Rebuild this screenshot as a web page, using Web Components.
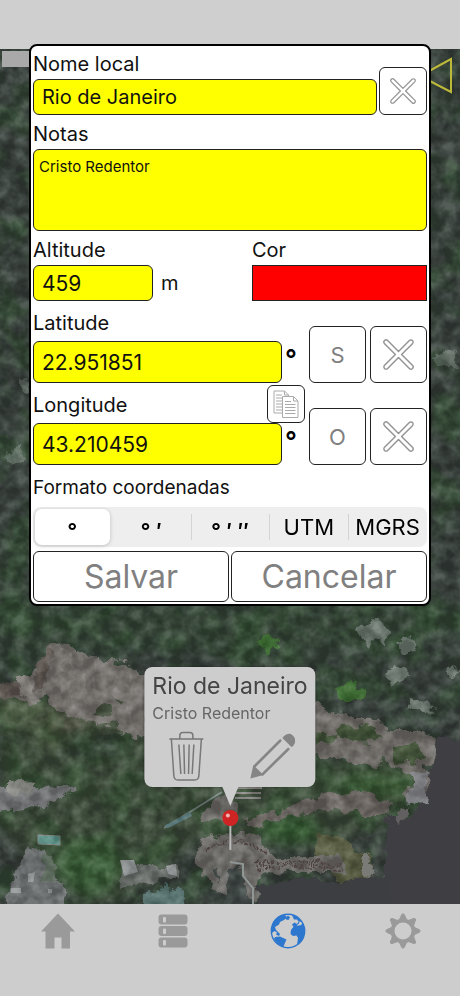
<!DOCTYPE html>
<html lang="pt">
<head>
<meta charset="utf-8">
<meta name="viewport" content="width=device-width, initial-scale=1">
<title>Mapa</title>
<style>
    body {
        margin: 0;
        font-family: Inter, "Liberation Sans", sans-serif;
        color: #111;
        background: #cdcdcd;
    }
</style>
</head>
<body>
<map-app></map-app>

<script>
const ICONS = {
    cross: `<svg viewBox="0 0 32 32" fill="#fff" stroke="#949494" stroke-width="1.5" stroke-linejoin="round">
        <path d="M4.8 1.6 L16 12.8 L27.2 1.6 A2.2 2.2 0 0 1 30.4 4.8 L19.2 16 L30.4 27.2 A2.2 2.2 0 0 1 27.2 30.4 L16 19.2 L4.8 30.4 A2.2 2.2 0 0 1 1.6 27.2 L12.8 16 L1.6 4.8 A2.2 2.2 0 0 1 4.8 1.6 Z"/></svg>`,
    copy: `<svg viewBox="0 0 26 28" fill="#fff" stroke="#aaa" stroke-width="1">
        <path d="M1 1 H11.5 L15.5 5 V23 H1 Z M11.5 1 V5 H15.5"/>
        <path d="M3 5 H9 M3 8 H9 M3 11 H9 M3 14 H9 M3 17 H9 M3 20 H9"/>
        <path d="M9.5 6.5 H20.5 L25 11 V27.5 H9.5 Z M20.5 6.5 V11 H25"/>
        <path d="M12 11.5 H18 M12 14.5 H22.5 M12 17.5 H22.5 M12 20.5 H22.5 M12 23.5 H22.5"/></svg>`,
    trash: `<svg viewBox="0 0 36 50" fill="none" stroke="#777" stroke-width="1.5" stroke-linejoin="round">
        <path d="M1 8 H35 M11.5 8 V4.5 Q11.5 1.5 14.5 1.5 H21.5 Q24.5 1.5 24.5 4.5 V8"/>
        <path d="M3 8 L5.5 45 Q6 49 9.5 49 H26.5 Q30 49 30.5 45 L33 8"/>
        <path d="M10.5 13.5 L12.5 43 M15.5 13.5 L16.2 43 M20.8 13.5 L20.2 43 M25.5 13.5 L23.8 43"/></svg>`,
    pencil: `<svg viewBox="0 0 46 46" fill="#858585">
        <path d="M33 5 Q37 0 41.5 1 Q47 4.5 45.5 10 Q44.5 13 42 14 Z"/>
        <path d="M1 45.5 L4 32 L14 42 Z"/>
        <path d="M5.5 33 L31 7.5 M13 41.5 L39 16" fill="none" stroke="#858585" stroke-width="2.5" stroke-linecap="round"/></svg>`,
    home: `<svg viewBox="0 0 36 36" fill="#9a9a9a">
        <path d="M18 0.5 L35 18.5 H30 V35.5 H21.5 V24.5 H14.5 V35.5 H5.5 V18.5 H1 Z"/></svg>`,
    list: `<svg viewBox="0 0 36 36" fill="#9a9a9a">
        <rect x="3.5" y="1.5" width="29" height="10" rx="3"/><rect x="3.5" y="13" width="29" height="10" rx="3"/>
        <rect x="3.5" y="24.5" width="29" height="10" rx="3"/>
        <g fill="#cdcdcd"><rect x="8" y="4" width="3" height="5.5" rx="1"/><rect x="8" y="15.5" width="3" height="5.5" rx="1"/>
        <rect x="8" y="27" width="3" height="5.5" rx="1"/></g></svg>`,
    globe: `<svg viewBox="0 0 36 36" fill="#2e77cf">
        <circle cx="18" cy="18" r="16.7" fill="#cdcdcd" stroke="#2e77cf" stroke-width="1.4"/>
        <path d="M15 1.5 Q7 2 3 9 Q0 16 2 20 L4.5 18 L7 19.5 L6 21.5 L9 23 L10 21 L6 17 L5 14 L9 11.5 L10 9 L14 7 L16.5 4.5 Z"/>
        <path d="M5 24 L10 23.5 L16.5 26.5 L14.5 31 L13.5 34 Q7 31.5 4 26 Z"/>
        <path d="M15 5 L18 2.5 L20 4.5 L18.5 7 L16 6.5 Z"/>
        <path d="M22 2 Q30 5 31.5 9 L28.5 8.5 L27 11 L24.5 9.5 L22 11.5 L23.5 14 L21 17 L20.5 21 L23 23 L26.5 22.5 L28 25 L27 32 Q33 28 34.5 21 Q35.5 14 32.5 9.5 L30 14.5 L26.5 12.5 L29.5 10 L27 6.5 L24 6.5 Z"/>
        <path d="M25 13 L32 12 L34 16 L30 22 L23 21 L22 16 Z"/></svg>`,
    gear: `<svg viewBox="-18 -18 36 36" fill="#9a9a9a" stroke="#9a9a9a">
        <circle r="10.5" fill="none" stroke-width="4"/>
        ${[0, 45, 90, 135, 180, 225, 270, 315].map((a) => `<path transform="rotate(${a})" stroke-width="1" stroke-linejoin="round" d="M-3.5 -11.5 L-1.2 -16.5 Q0 -18 1.2 -16.5 L3.5 -11.5 Z"/>`).join('')}</svg>`
};

/* Icon picked by name; the size comes from the host */
class AppIcon extends HTMLElement {
    connectedCallback() {
        this.attachShadow({ mode: 'open' });
        this.shadowRoot.innerHTML = `
        <style>
            :host { display: block; }
            svg { display: block; width: 100%; height: 100%; }
        </style>
        ${ICONS[this.getAttribute('name')] || ''}
        `;
    }
}

/* Bordered push button */
class BoxButton extends HTMLElement {
    connectedCallback() {
        this.attachShadow({ mode: 'open' });
        this.shadowRoot.innerHTML = `
        <style>
            :host { display: block; font-size: 22px; }
            button {
                display: flex;
                align-items: center;
                justify-content: center;
                box-sizing: border-box;
                width: 100%;
                height: 100%;
                padding: 0;
                border: 1px solid #222;
                border-radius: 6px;
                background: #fff;
                color: #808080;
                font: inherit;
                cursor: pointer;
            }
        </style>
        <button type="button"><slot></slot></button>
        `;
        if (this.hasAttribute('label')) {
            this.shadowRoot.querySelector('button').setAttribute('aria-label', this.getAttribute('label'));
        }
    }
}

/* Label above a text field; "tools" sits beside the label, "unit" beside the field */
class TextField extends HTMLElement {
    connectedCallback() {
        const value = this.getAttribute('value') || '';
        const control = this.hasAttribute('multiline')
            ? `<textarea id="field">${value}</textarea>`
            : `<input id="field" type="text" value="${value}">`;

        this.attachShadow({ mode: 'open' });
        this.shadowRoot.innerHTML = `
        <style>
            :host { display: block; --label: 30px; --field: 36px; --text: 20px; }
            .head {
                display: flex;
                align-items: flex-end;
                justify-content: space-between;
                height: var(--label);
            }
            label { font-size: 20px; line-height: var(--label); }
            .line { display: flex; }
            input, textarea {
                flex: 1;
                min-width: 0;
                box-sizing: border-box;
                height: var(--field);
                margin: 0;
                padding: 0 8px;
                border: 1px solid #222;
                border-radius: 6px;
                background: #ff0;
                color: #111;
                font: inherit;
                font-size: var(--text);
                outline: none;
                resize: none;
            }
            textarea { padding: 7px 5px; font-size: 15px; line-height: 20px; }
        </style>
        <div class="head"><label for="field">${this.getAttribute('label')}</label><slot name="tools"></slot></div>
        <div class="line">${control}<slot name="unit"></slot></div>
        `;
    }
}

class ColorField extends HTMLElement {
    connectedCallback() {
        this.attachShadow({ mode: 'open' });
        this.shadowRoot.innerHTML = `
        <style>
            :host { display: block; }
            label { display: block; font-size: 20px; line-height: 30px; }
            input {
                display: block;
                appearance: none;
                box-sizing: border-box;
                width: 100%;
                height: 36px;
                padding: 0;
                border: 1px solid #222;
                background: none;
            }
            input::-webkit-color-swatch-wrapper { padding: 0; }
            input::-webkit-color-swatch { border: 0; border-radius: 0; }
        </style>
        <label for="color">${this.getAttribute('label')}</label>
        <input id="color" type="color" value="${this.getAttribute('value')}">
        `;
    }
}

class FormatPicker extends HTMLElement {
    connectedCallback() {
        const options = [['°', 1], ['° ′', 1], ['° ′ ″', 1], ['UTM', 0], ['MGRS', 0]];

        this.attachShadow({ mode: 'open' });
        this.shadowRoot.innerHTML = `
        <style>
            :host { display: block; }
            fieldset { margin: 0; padding: 0; border: 0; min-width: 0; }
            legend { padding: 0; font-size: 19px; line-height: 38px; }
            .track {
                display: grid;
                grid-template-columns: repeat(5, 1fr);
                height: 40px;
                border-radius: 8px;
                background: #eee;
            }
            label { position: relative; display: flex; padding: 2px; }
            input { position: absolute; opacity: 0; }
            span {
                flex: 1;
                display: flex;
                align-items: center;
                justify-content: center;
                border-radius: 7px;
                font-size: 22px;
                line-height: 24px;
                color: #000;
                white-space: pre;
            }
            .sign { padding-top: 8px; font-weight: 600; }
            input:checked + span { background: #fff; box-shadow: 0 1px 4px rgba(0, 0, 0, 0.2); }
            label:nth-child(n + 3) { background: linear-gradient(#d4d4d4, #d4d4d4) left center / 1px 26px no-repeat; }
        </style>
        <fieldset>
            <legend>${this.getAttribute('label')}</legend>
            <div class="track">
                ${options.map(([text, sign], i) => `<label><input type="radio" name="format"${i ? '' : ' checked'}><span${sign ? ' class="sign"' : ''}>${text}</span></label>`).join('')}
            </div>
        </fieldset>
        `;
    }
}

/* Coordinate field with its hemisphere and clear buttons */
class CoordinateRow extends HTMLElement {
    connectedCallback() {
        this.attachShadow({ mode: 'open' });
        this.shadowRoot.innerHTML = `
        <style>
            :host {
                display: grid;
                grid-template-columns: minmax(0, 1fr) 57px 57px;
                column-gap: 4px;
                align-items: end;
            }
            text-field { --label: 36px; --field: 42px; --text: 21px; }
            .degree {
                box-sizing: border-box;
                width: 23px;
                padding-left: 3px;
                font-size: 26px;
                line-height: 36px;
                font-weight: 600;
                color: #000;
            }
            box-button { height: 57px; }
            app-icon { width: 31px; height: 31px; }
        </style>
        <text-field label="${this.getAttribute('label')}" value="${this.getAttribute('value')}">
            <slot slot="tools"></slot>
            <span class="degree" slot="unit">°</span>
        </text-field>
        <box-button>${this.getAttribute('side')}</box-button>
        <box-button label="Limpar"><app-icon name="cross"></app-icon></box-button>
        `;
    }
}

class PlaceDialog extends HTMLElement {
    connectedCallback() {
        this.attachShadow({ mode: 'open' });
        this.shadowRoot.innerHTML = `
        <style>
            :host { display: block; }
            form {
                display: flex;
                flex-direction: column;
                gap: 4px;
                padding: 3px 2px 2px;
                border: 2px solid #000;
                border-radius: 8px;
                background: #fff;
            }
            .row { display: flex; align-items: flex-end; gap: 2px; }
            .grow { flex: 1; }
            .clear { width: 48px; height: 48px; }
            .clear app-icon { width: 26px; height: 26px; }
            .notes { --field: 82px; }
            .pair { display: grid; grid-template-columns: 5fr 4fr; }
            .altitude { width: 146px; --text: 21px; }
            .unit { width: 26px; padding-left: 8px; box-sizing: border-box; font-size: 20px; line-height: 36px; }
            .copy { width: 38px; height: 38px; }
            .copy app-icon { width: 26px; height: 28px; }
            .actions box-button { flex: 1; height: 51px; font-size: 32px; }
        </style>
        <form>
            <div class="row">
                <text-field class="grow" label="Nome local" value="Rio de Janeiro"></text-field>
                <box-button class="clear" label="Limpar"><app-icon name="cross"></app-icon></box-button>
            </div>
            <text-field class="notes" label="Notas" value="Cristo Redentor" multiline></text-field>
            <div class="pair">
                <text-field class="altitude" label="Altitude" value="459"><span class="unit" slot="unit">m</span></text-field>
                <color-field label="Cor" value="#ff0000"></color-field>
            </div>
            <coordinate-row label="Latitude" value="22.951851" side="S"></coordinate-row>
            <coordinate-row label="Longitude" value="43.210459" side="O">
                <box-button class="copy" label="Copiar"><app-icon name="copy"></app-icon></box-button>
            </coordinate-row>
            <format-picker label="Formato coordenadas"></format-picker>
            <div class="row actions">
                <box-button>Salvar</box-button>
                <box-button>Cancelar</box-button>
            </div>
        </form>
        `;
    }
}

/* Callout with its pin */
class MapCallout extends HTMLElement {
    connectedCallback() {
        this.attachShadow({ mode: 'open' });
        this.shadowRoot.innerHTML = `
        <style>
            :host { display: flex; flex-direction: column; align-items: center; }
            article {
                box-sizing: border-box;
                padding: 4px 8px 6px;
                border-radius: 8px;
                background: #cdcdcd;
                box-shadow: 0 0 2px rgba(0, 0, 0, 0.4);
            }
            h2 { margin: 0; font-size: 23px; line-height: 30px; font-weight: 400; color: #444; white-space: nowrap; }
            p { margin: 0; font-size: 16px; line-height: 24px; color: #666; }
            .tools { display: flex; justify-content: space-between; padding: 6px 12px 0 16px; }
            button { padding: 0; border: 0; background: none; cursor: pointer; }
            .trash { width: 36px; height: 50px; }
            .pencil { width: 46px; height: 46px; }
            svg { display: block; width: 18px; height: 64px; }
        </style>
        <article>
            <h2><slot></slot></h2>
            <p><slot name="note"></slot></p>
            <div class="tools">
                <button type="button" aria-label="Apagar"><app-icon class="trash" name="trash"></app-icon></button>
                <button type="button" aria-label="Editar"><app-icon class="pencil" name="pencil"></app-icon></button>
            </div>
        </article>
        <svg viewBox="0 0 18 64">
            <path d="M1 0 H17 L9 19 Z" fill="#cdcdcd"/>
            <path d="M9 36 V63" stroke="#bbb" stroke-width="2"/>
            <circle cx="9" cy="31" r="8" fill="#cf2424"/>
            <circle cx="6.5" cy="28.5" r="2" fill="#f3b3b3"/>
        </svg>
        `;
    }
}

/* Aerial view: rough-edged shapes with a grain of foliage over them */
class AerialMap extends HTMLElement {
    connectedCallback() {
        this.attachShadow({ mode: 'open' });
        this.shadowRoot.innerHTML = `
        <style>
            :host { display: block; overflow: hidden; }
            svg { display: block; width: 100%; height: 100%; }
            .grain { mix-blend-mode: soft-light; }
        </style>
        <svg viewBox="0 49 460 855" preserveAspectRatio="xMidYMid slice" aria-hidden="true">
            <defs>
                <filter id="rough" x="-5%" y="-5%" width="110%" height="110%" color-interpolation-filters="sRGB">
                    <feTurbulence type="fractalNoise" baseFrequency="0.08" numOctaves="4" seed="4"/>
                    <feDisplacementMap in="SourceGraphic" scale="14" xChannelSelector="R" yChannelSelector="G"/>
                </filter>
                <filter id="leaves" x="0" y="0" width="100%" height="100%" color-interpolation-filters="sRGB">
                    <feTurbulence type="fractalNoise" baseFrequency="0.07" numOctaves="3" seed="11"/>
                    <feColorMatrix values="2 0 0 0 -0.62  2 0 0 0 -0.6  2 0 0 0 -0.62  0 0 0 0 1"/>
                </filter>
                <filter id="tint" x="0" y="0" width="100%" height="100%" color-interpolation-filters="sRGB">
                    <feTurbulence type="fractalNoise" baseFrequency="0.03" numOctaves="4" seed="7"/>
                    <feColorMatrix values="0 0 0 0 0.22  0 0 0 0 0.35  0 0 0 0 0.21  0 4 0 0 -1.7"/>
                </filter>
                <filter id="soft"><feGaussianBlur stdDeviation="7"/></filter>
            </defs>
            <rect y="49" width="460" height="855" fill="#3d4441"/>
            <g filter="url(#soft)">
                <path d="M0 600 H460 V640 L300 660 L130 650 L0 670 Z" fill="#3a483c"/>
                <path d="M0 695 L60 700 L150 735 L220 780 L330 760 L430 740 L420 800 L330 850 L200 840 L120 904 L80 904 L0 830 Z" fill="#43503f"/>
                <ellipse cx="20" cy="710" rx="35" ry="16" fill="#4d5c44"/>
                <ellipse cx="70" cy="728" rx="34" ry="24" fill="#55594a"/>
                <ellipse cx="88" cy="865" rx="34" ry="26" fill="#40603d"/>
                <ellipse cx="290" cy="830" rx="30" ry="14" fill="#3b5f37"/>
                <ellipse cx="380" cy="785" rx="40" ry="14" fill="#3c5a38"/>
                <ellipse cx="95" cy="745" rx="38" ry="14" fill="#38453a"/>
            </g>
            <rect y="49" width="460" height="855" filter="url(#tint)" opacity="0.45"/>
            <g filter="url(#rough)">
                <path d="M52 643 L68 644 L90 660 L125 662 L148 676 V738 L125 736 L105 728 L85 722 L62 712 L46 698 L30 704 L4 694 V686 L28 676 L38 664 Z" fill="#777370"/>
                <path d="M52 643 L46 690 L32 690 L38 660 Z M-5 684 L26 680 L30 696 L-5 697 Z" fill="#625a56"/>
                <path d="M16 678 L29 674 L34 698 L24 696 Z" fill="#85807c"/>
                <path d="M100 706 Q112 702 112 712 Q100 722 96 712 Z M96 724 L118 722 L122 734 L98 732 Z M112 700 L126 702 L122 706 Z" fill="#4c5646"/>
                <path d="M-5 786 L25 790 L72 782 L76 790 L45 806 L-5 814 Z" fill="#77777a"/>
                <path d="M8 780 L32 784 L30 794 L8 792 Z" fill="#858482"/>
                <path d="M28 846 L48 852 L52 872 L66 886 L66 910 H2 L16 870 Z" fill="#717374"/>
                <path d="M44 854 L54 856 L56 880 L42 880 Z" fill="#606e62"/>
                <path d="M318 706 L350 718 L378 718 L390 730 L420 730 L440 742 L438 758 L424 764 L432 774 L428 804 L408 804 L406 794 L418 780 L400 768 L380 758 L378 770 L340 760 L316 754 L290 740 L290 706 Z" fill="#736f6c"/>
                <path d="M336 728 L366 724 L386 736 L372 742 L340 740 Z M310 736 L338 732 L334 744 L310 746 Z M392 744 L416 742 L422 762 L396 764 Z" fill="#48583f"/>
                <path d="M410 772 L430 772 L424 786 L432 796 L424 808 L404 804 L414 786 Z" fill="#85858a"/>
                <path d="M244 820 L290 806 L330 794 L362 792 L392 802 L384 818 L364 818 L340 808 L300 814 L250 828 Z" fill="#6d6764"/>
                <path d="M320 832 L340 836 L370 860 L374 884 L340 882 L316 852 Z" fill="#5d6047"/>
                <path d="M200 840 L220 832 L262 838 L270 856 L340 856 L346 872 L290 872 L262 874 L256 904 L214 890 L194 864 Z" fill="#716e6c"/>
                <path d="M204 806 L226 796 L240 812 L220 822 L200 820 Z" fill="#706d6a"/>
                <path d="M118 866 L176 866 L180 878 L140 884 L120 888 Z" fill="#6c706e"/>
                <path d="M144 892 L168 886 L184 892 L186 910 H144 Z" fill="#5c7674"/>
                <path d="M212 870 L218 866 L220 884 Z M228 872 L240 864 L244 884 L256 910 H224 Z" fill="#464d4c"/>
                <g fill="#6f7a72">
                    <path d="M356 628 L372 620 L388 630 L386 644 L376 636 L368 646 L360 638 Z M398 642 L412 638 L418 650 L402 652 Z M384 674 L402 668 L410 676 L390 682 Z M444 668 L456 666 L464 674 L450 676 Z M408 698 L420 698 L434 712 L428 714 L412 708 Z"/>
                    <path d="M20 380 L28 378 L30 392 L20 392 Z M4 452 L22 448 L24 460 L12 466 Z M434 354 L452 350 L458 366 L436 368 Z" opacity="0.7"/>
                </g>
                <path d="M336 688 L352 682 L366 692 L360 702 L342 702 Z M256 640 L270 634 L278 644 L268 652 Z" fill="#437038"/>
            </g>
            <g stroke="#8d8885" stroke-width="2" opacity="0.4" filter="url(#rough)">
                <path d="M62 648 V700 M70 652 L74 708 M84 660 V712 M94 662 L98 700 M116 668 V700 M130 672 V724"/>
            </g>
            <path d="M38 835 L60 836 L60 845 L38 844 Z" fill="#5f9188" stroke="#858988"/>
            <path d="M120 860 L134 860 L138 872 L124 876 Z M166 866 L176 864 L177 876 L168 874 Z M11 888 H21 V893 H11 Z M28 874 L35 872 L33 882 L28 882 Z M48 889 H52 V893 H48 Z" fill="#96999a"/>
            <path d="M164 828 L222 792" stroke="#76837f" stroke-width="2"/>
            <path d="M164 826 L190 812 L192 816 L168 828 Z" fill="#587578"/>
            <path d="M236 788 H262 M235 793 H261 M235 798 H261" stroke="#8a8785" stroke-width="2"/>
            <rect class="grain" y="49" width="460" height="855" filter="url(#leaves)" opacity="0.4"/>
            <g filter="url(#rough)">
                <path d="M438 735 L480 745 V920 H378 L386 850 L388 814 L402 818 L426 806 L430 770 Z" fill="#3e3e43"/>
                <path d="M258 886 L300 878 L345 884 L392 872 V920 H258 Z" fill="#3c3e41"/>
                <path d="M362 852 L376 872 L370 878 L362 874 Z" fill="#7a7a76"/>
                <path d="M396 812 L408 806 L404 820 L396 826 Z" fill="#625f60"/>
            </g>
            <path d="M230 862 L243 864 V876 L253 888 L253 904" fill="none" stroke="#8f9695" stroke-width="2"/>
            <path d="M256 864 Q290 858 342 866 M258 868 Q290 862 340 870 M206 846 Q232 836 258 846 L264 858" fill="none" stroke="#4d4142" stroke-width="3" stroke-dasharray="2 2" filter="url(#rough)"/>
            <rect x="2" y="51" width="30" height="16" fill="#a9a9a9"/>
            <path d="M420 76 L451 59 V92 Z" fill="none" stroke="#bdb93a" stroke-width="2"/>
        </svg>
        `;
    }
}

class TabBar extends HTMLElement {
    connectedCallback() {
        const tabs = [['home', 'Início'], ['list', 'Lista'], ['globe', 'Mapa'], ['gear', 'Ajustes']];

        this.attachShadow({ mode: 'open' });
        this.shadowRoot.innerHTML = `
        <style>
            :host { display: block; background: #cdcdcd; }
            nav { display: flex; padding: 9px 0 47px; }
            a { flex: 1; display: flex; justify-content: center; }
            app-icon { width: 36px; height: 36px; }
        </style>
        <nav>
            ${tabs.map(([icon, name]) => `<a href="#${icon}" aria-label="${name}"><app-icon name="${icon}"></app-icon></a>`).join('')}
        </nav>
        `;
    }
}

class MapApp extends HTMLElement {
    connectedCallback() {
        this.attachShadow({ mode: 'open' });
        this.shadowRoot.innerHTML = `
        <style>
            :host { position: relative; display: flex; flex-direction: column; min-height: 100vh; }
            header { height: 49px; background: #cfcfcf; }
            main { position: relative; flex: 1; display: flex; }
            aerial-map { flex: 1; height: calc(100vh - 141px); min-height: 640px; }
            place-dialog { position: absolute; top: 44px; left: 29px; right: 29px; }
            map-callout { position: absolute; bottom: 53px; left: 50%; transform: translateX(-50%); }
        </style>
        <header></header>
        <main>
            <aerial-map></aerial-map>
            <map-callout>Rio de Janeiro<span slot="note">Cristo Redentor</span></map-callout>
        </main>
        <tab-bar></tab-bar>
        <place-dialog></place-dialog>
        `;
    }
}

customElements.define('app-icon', AppIcon);
customElements.define('box-button', BoxButton);
customElements.define('text-field', TextField);
customElements.define('color-field', ColorField);
customElements.define('format-picker', FormatPicker);
customElements.define('coordinate-row', CoordinateRow);
customElements.define('place-dialog', PlaceDialog);
customElements.define('map-callout', MapCallout);
customElements.define('aerial-map', AerialMap);
customElements.define('tab-bar', TabBar);
customElements.define('map-app', MapApp);
</script>
</body>
</html>
